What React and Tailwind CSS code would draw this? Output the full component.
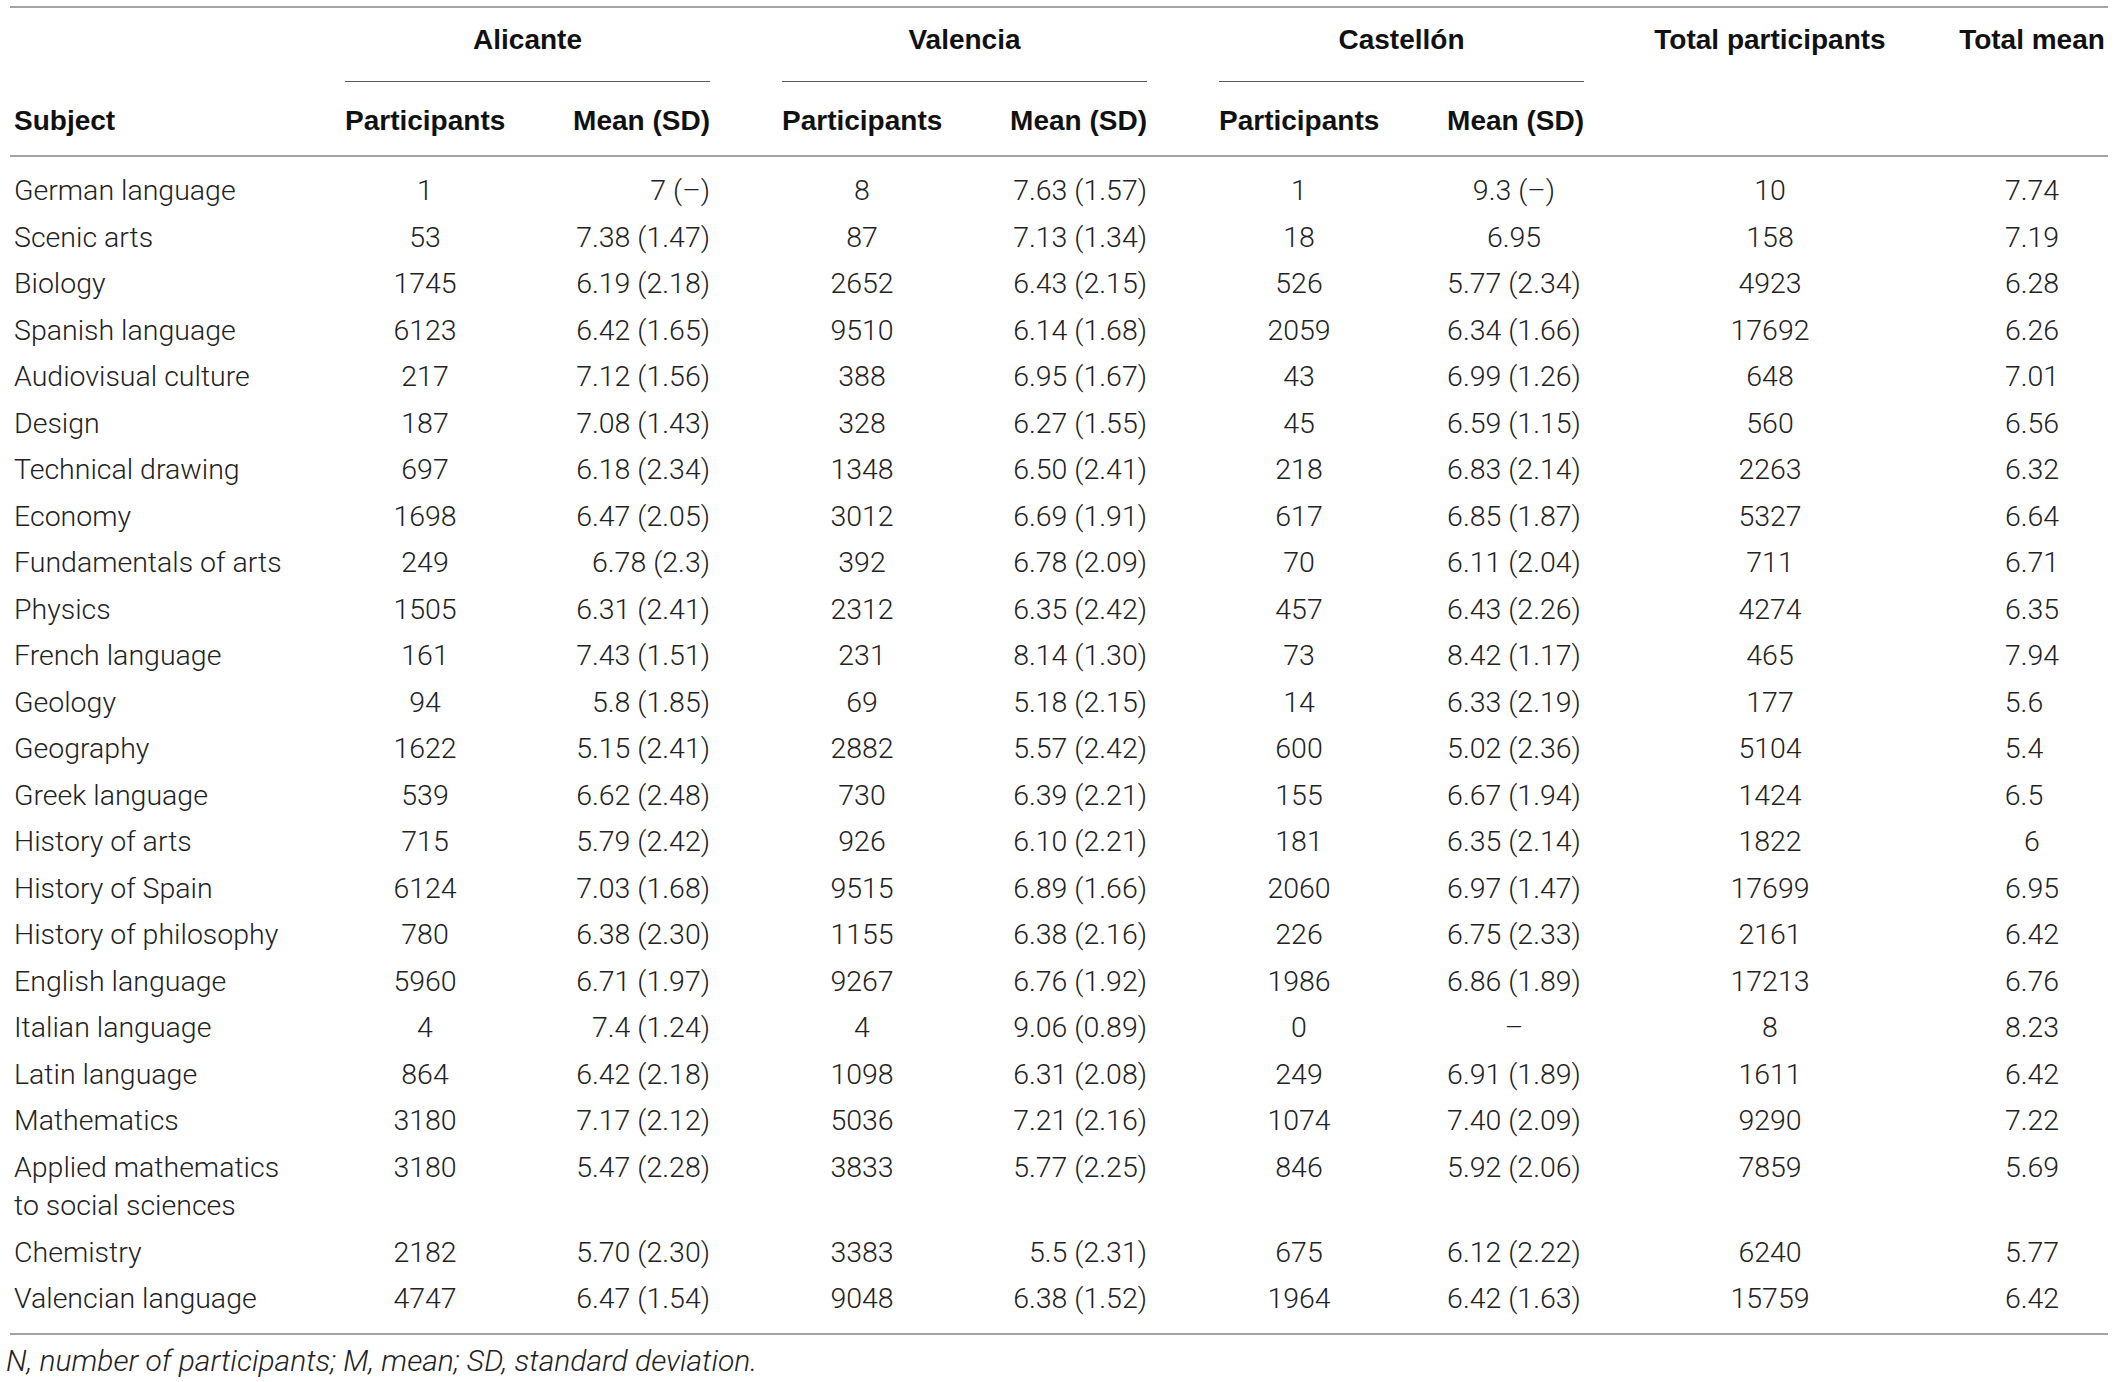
const cols =
  "grid grid-cols-[335px_160px_205px_72px_160px_205px_72px_160px_205px_372px_152px]";

const rows = [
  ["German language", "1", "7 (–)", "8", "7.63 (1.57)", "1", "9.3 (–)", "10", "7.74"],
  ["Scenic arts", "53", "7.38 (1.47)", "87", "7.13 (1.34)", "18", "6.95", "158", "7.19"],
  ["Biology", "1745", "6.19 (2.18)", "2652", "6.43 (2.15)", "526", "5.77 (2.34)", "4923", "6.28"],
  ["Spanish language", "6123", "6.42 (1.65)", "9510", "6.14 (1.68)", "2059", "6.34 (1.66)", "17692", "6.26"],
  ["Audiovisual culture", "217", "7.12 (1.56)", "388", "6.95 (1.67)", "43", "6.99 (1.26)", "648", "7.01"],
  ["Design", "187", "7.08 (1.43)", "328", "6.27 (1.55)", "45", "6.59 (1.15)", "560", "6.56"],
  ["Technical drawing", "697", "6.18 (2.34)", "1348", "6.50 (2.41)", "218", "6.83 (2.14)", "2263", "6.32"],
  ["Economy", "1698", "6.47 (2.05)", "3012", "6.69 (1.91)", "617", "6.85 (1.87)", "5327", "6.64"],
  ["Fundamentals of arts", "249", "6.78 (2.3)", "392", "6.78 (2.09)", "70", "6.11 (2.04)", "711", "6.71"],
  ["Physics", "1505", "6.31 (2.41)", "2312", "6.35 (2.42)", "457", "6.43 (2.26)", "4274", "6.35"],
  ["French language", "161", "7.43 (1.51)", "231", "8.14 (1.30)", "73", "8.42 (1.17)", "465", "7.94"],
  ["Geology", "94", "5.8 (1.85)", "69", "5.18 (2.15)", "14", "6.33 (2.19)", "177", "5.6\u2007"],
  ["Geography", "1622", "5.15 (2.41)", "2882", "5.57 (2.42)", "600", "5.02 (2.36)", "5104", "5.4\u2007"],
  ["Greek language", "539", "6.62 (2.48)", "730", "6.39 (2.21)", "155", "6.67 (1.94)", "1424", "6.5\u2007"],
  ["History of arts", "715", "5.79 (2.42)", "926", "6.10 (2.21)", "181", "6.35 (2.14)", "1822", "6"],
  ["History of Spain", "6124", "7.03 (1.68)", "9515", "6.89 (1.66)", "2060", "6.97 (1.47)", "17699", "6.95"],
  ["History of philosophy", "780", "6.38 (2.30)", "1155", "6.38 (2.16)", "226", "6.75 (2.33)", "2161", "6.42"],
  ["English language", "5960", "6.71 (1.97)", "9267", "6.76 (1.92)", "1986", "6.86 (1.89)", "17213", "6.76"],
  ["Italian language", "4", "7.4 (1.24)", "4", "9.06 (0.89)", "0", "–", "8", "8.23"],
  ["Latin language", "864", "6.42 (2.18)", "1098", "6.31 (2.08)", "249", "6.91 (1.89)", "1611", "6.42"],
  ["Mathematics", "3180", "7.17 (2.12)", "5036", "7.21 (2.16)", "1074", "7.40 (2.09)", "9290", "7.22"],
  ["Applied mathematics|to social sciences", "3180", "5.47 (2.28)", "3833", "5.77 (2.25)", "846", "5.92 (2.06)", "7859", "5.69"],
  ["Chemistry", "2182", "5.70 (2.30)", "3383", "5.5 (2.31)", "675", "6.12 (2.22)", "6240", "5.77"],
  ["Valencian language", "4747", "6.47 (1.54)", "9048", "6.38 (1.52)", "1964", "6.42 (1.63)", "15759", "6.42"],
];

function Group({ title, span }) {
  return (
    <div className={`${span} flex flex-col`}>
      <div className="text-center font-bold text-[#111]">{title}</div>
      <div className="mt-[22px] h-px bg-[#5a5a5a]" />
    </div>
  );
}

function Subject({ text }) {
  const lines = text.split("|");
  return (
    <div className="pl-[4px]">
      {lines.map((l, i) => (
        <div key={i}>{l}</div>
      ))}
    </div>
  );
}

export default function App() {
  return (
    <div className="min-h-screen bg-white pt-[6px] font-['Liberation_Sans',Arial,sans-serif] text-[28px] text-[#222]">
      <div className="ml-[10px] w-[2098px] border-t-2 border-b-2 border-[#a3a3a3]">
        {/* group header */}
        <div className={`${cols} pt-[13px] leading-[38px]`}>
          <div />
          <Group title="Alicante" span="col-span-2" />
          <div />
          <Group title="Valencia" span="col-span-2" />
          <div />
          <Group title="Castellón" span="col-span-2" />
          <div className="text-center font-bold whitespace-nowrap text-[#111]">Total participants</div>
          <div className="flex justify-center font-bold whitespace-nowrap text-[#111]">Total mean</div>
        </div>

        {/* sub header */}
        <div className={`${cols} border-b-2 border-[#a3a3a3] pt-[20px] pb-[15px] leading-[38px] font-bold text-[#111]`}>
          <div className="pl-[4px]">Subject</div>
          <div className="text-center">Participants</div>
          <div className="text-right">Mean (SD)</div>
          <div />
          <div className="text-center">Participants</div>
          <div className="text-right">Mean (SD)</div>
          <div />
          <div className="text-center">Participants</div>
          <div className="text-right">Mean (SD)</div>
          <div />
          <div />
        </div>

        {/* body */}
        <div className="pt-[11px] pb-[10px] font-['Roboto','Liberation_Sans',sans-serif] text-[28.5px] font-light">
          {rows.map((r) => (
            <div key={r[0]} className={`${cols} py-1 leading-[38.5px]`}>
              <Subject text={r[0]} />
              <div className="text-center">{r[1]}</div>
              <div className="text-right">{r[2]}</div>
              <div />
              <div className="text-center">{r[3]}</div>
              <div className="text-right">{r[4]}</div>
              <div />
              <div className="text-center">{r[5]}</div>
              <div className="pl-[65px] text-center">{r[6]}</div>
              <div className="text-center">{r[7]}</div>
              <div className="text-center whitespace-pre">{r[8]}</div>
            </div>
          ))}
        </div>
      </div>

      <p className="pt-[7px] pl-[6px] leading-[38px] italic font-['Roboto','Liberation_Sans',sans-serif] text-[30px] font-light text-[#222]">
        N, number of participants; M, mean; SD, standard deviation.
      </p>
    </div>
  );
}
